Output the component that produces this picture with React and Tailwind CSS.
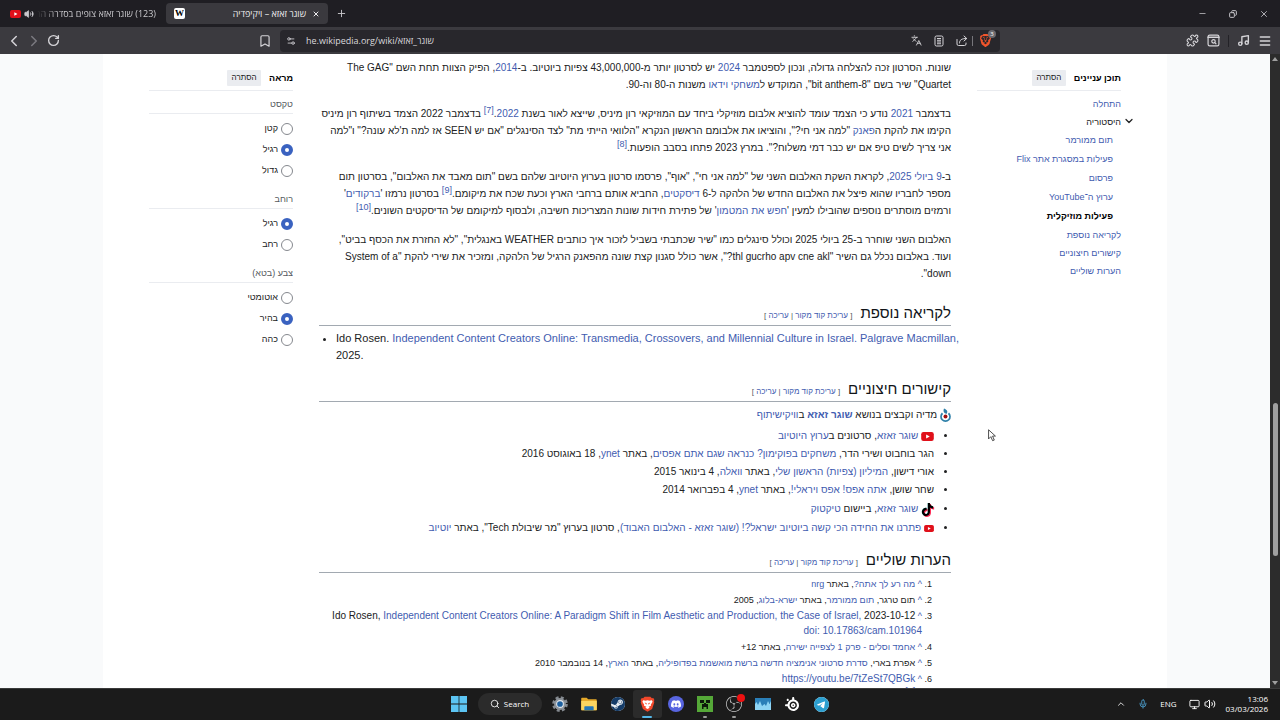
import React from 'react';
import {
  Bookmark,
  ChevronDown,
  ChevronLeft,
  ChevronRight,
  ChevronUp,
  Languages,
  Menu,
  Mic,
  Minus,
  Monitor,
  Music,
  Plus,
  Puzzle,
  RotateCw,
  Search,
  Copy,
  Settings2,
  Volume2,
  X,
} from 'lucide-react';
import { SiBrave, SiDiscord, SiObsstudio, SiSteam, SiSteelseries, SiTelegram, SiTiktok } from 'react-icons/si';

const A = ({ children, className = '' }) => (
  <a href="#" className={`text-[#3f5cb0] ${className}`}>{children}</a>
);

const Sup = ({ children }) => (
  <sup className="text-[9px] leading-none"><A>[{children}]</A></sup>
);

const YouTubeLogo = ({ className }) => (
  <svg viewBox="0 0 28 20" className={className} aria-hidden="true">
    <rect width="28" height="20" rx="5" fill="#e0101a" />
    <path d="M11 5.5v9l8-4.5z" fill="#fff" />
  </svg>
);

const CommonsLogo = () => (
  <svg viewBox="0 0 22 28" className="inline-block h-[14px] w-[11px] align-middle" aria-hidden="true">
    <circle cx="11" cy="17" r="4" fill="#a01010" />
    <path d="M5 10.500a9 9 0 1 0 12 0" fill="none" stroke="#2d7fa8" strokeWidth="3.400" />
    <path d="M8 1c7 3 8 6 5 11-6-2-7-6-5-11z" fill="#2d7fa8" />
  </svg>
);

const ReaderIcon = () => (
  <svg viewBox="0 0 24 24" className="size-3" fill="none" stroke="currentColor" strokeWidth="2">
    <rect x="4" y="2" width="16" height="20" rx="3" />
    <path d="M8 7h8M8 10.500h8M8 14h8M8 17.500h8" />
  </svg>
);

const ShareIcon = () => (
  <svg viewBox="0 0 24 24" className="size-3" fill="none" stroke="currentColor" strokeWidth="2" strokeLinecap="round" strokeLinejoin="round">
    <path d="M2 9v9a3 3 0 0 0 3 3h12a3 3 0 0 0 3-3v-2" />
    <path d="M7 16c0-6 4-9 14-9M16 2l5.500 5-5.500 5" />
  </svg>
);

const TabSearchIcon = () => (
  <svg viewBox="0 0 24 24" className="size-[13px]" fill="none" stroke="currentColor" strokeWidth="2.200" strokeLinecap="round">
    <rect x="2" y="2" width="20" height="20" rx="3" />
    <path d="M2 6h20" strokeWidth="3" />
    <circle cx="12" cy="13.500" r="3.200" />
    <path d="M14.500 16l2 2" />
  </svg>
);

const tocItems = [
  { label: 'התחלה' },
  { label: 'היסטוריה', open: true },
  { label: 'תום ממורמר', sub: true },
  { label: 'פעילות במסגרת אתר Flix', sub: true },
  { label: 'פרסום', sub: true },
  { label: 'ערוץ ה־YouTube', sub: true },
  { label: 'פעילות מוזיקלית', sub: true, active: true },
  { label: 'לקריאה נוספת' },
  { label: 'קישורים חיצוניים' },
  { label: 'הערות שוליים' },
];

const appearance = [
  { id: 'text', title: 'טקסט', options: ['קטן', 'רגיל', 'גדול'], value: 'רגיל' },
  { id: 'width', title: 'רוחב', options: ['רגיל', 'רחב'], value: 'רגיל' },
  { id: 'color', title: 'צבע (בטא)', options: ['אוטומטי', 'בהיר', 'כהה'], value: 'בהיר' },
];

const PanelHeader = ({ title }) => (
  <div className="flex h-[37px] items-end gap-2 border-b border-[#eaecf0] pb-1">
    <h2 className="text-[9px] leading-4 font-bold text-black">{title}</h2>
    <button type="button" className="h-4 w-[34px] rounded-[1px] bg-[#eaecf0] text-[8px] leading-4 text-[#202122]">הסתרה</button>
  </div>
);

const Contents = () => (
  <nav aria-label="תוכן עניינים">
    <PanelHeader title="תוכן עניינים" />
    <ul className="pt-1 text-[9px] whitespace-nowrap">
      {tocItems.map((item) => (
        <li key={item.label} className={item.sub ? 'ps-2 leading-[19px]' : 'relative leading-[18px]'}>
          {item.open && <ChevronDown size={12} strokeWidth={2.5} className="absolute top-0.5 -right-[14px] text-[#202122]" />}
          <a
            href="#"
            className={item.active ? 'font-bold text-black' : item.open ? 'text-[#202122]' : 'text-[#3f5cb0]'}
          >
            {item.label}
          </a>
        </li>
      ))}
    </ul>
  </nav>
);

const Appearance = () => (
  <aside>
    <PanelHeader title="מראה" />
    <div className="flex flex-col gap-[11px] pt-1.5 text-[9px]">
      {appearance.map((group) => (
        <fieldset key={group.id}>
          <legend className="w-full border-b border-[#eaecf0] pb-0.5 leading-[14px] text-[#54595d]">{group.title}</legend>
          <div className="pt-1">
            {group.options.map((option) => (
              <label key={option} className="flex h-[21px] items-center gap-[3px] text-[#202122]">
                <input
                  type="radio"
                  name={group.id}
                  defaultChecked={option === group.value}
                  className="size-3 appearance-none rounded-full border border-[#85888e] bg-white checked:border-4 checked:border-[#3a62c0]"
                />
                {option}
              </label>
            ))}
          </div>
        </fieldset>
      ))}
    </div>
  </aside>
);

const SectionHeading = ({ title, className = '' }) => (
  <div className={`flex h-7 items-baseline gap-2 border-b border-[#a2a9b1] ${className}`}>
    <h2 className="text-[15px] leading-[30px] text-[#101418]">{title}</h2>
    <span className="text-[8px] text-[#54595d]">
      [ <A>עריכת קוד מקור</A> | <A>עריכה</A> ]
    </span>
  </div>
);

const Article = () => (
  <main className="text-[10px] leading-[17px] whitespace-nowrap text-[#202122]">
    <div className="flex flex-col gap-3 pt-[5px]">
      <p>
        שונות. הסרטון זכה להצלחה גדולה, ונכון לספטמבר <A>2024</A> יש לסרטון יותר מ-43,000,000 צפיות ביוטיוב. ב-<A>2014</A>, הפיק הצוות תחת השם "The GAG<br />
        Quartet" שיר בשם "8-bit anthem", המוקדש ל<A>משחקי וידאו</A> משנות ה-80 וה-90.
      </p>
      <p>
        בדצמבר <A>2021</A> נודע כי הצמד עומד להוציא אלבום מוזיקלי ביחד עם המוזיקאי רון מיניס, שייצא לאור בשנת <A>2022</A>.<Sup>7</Sup> בדצמבר 2022 הצמד בשיתוף רון מיניס<br />
        הקימו את להקת ה<A>פאנק</A> "למה אני חי?", והוציאו את אלבומם הראשון הנקרא "הלוואי הייתי מת" לצד הסינגלים "אם יש SEEN אז למה ת'לא עונה?" ו"למה<br />
        אני צריך לשים טיפ אם יש כבר דמי משלוח?". במרץ 2023 פתחו בסבב הופעות.<Sup>8</Sup>
      </p>
      <p>
        ב-<A>9 ביולי 2025</A>, לקראת השקת האלבום השני של "למה אני חי", "אוף", פרסמו סרטון בערוץ היוטיוב שלהם בשם "תום מאבד את האלבום", בסרטון תום<br />
        מספר לחבריו שהוא פיצל את האלבום החדש של הלהקה ל-6 <A>דיסקטים</A>, החביא אותם ברחבי הארץ וכעת שכח את מיקומם.<Sup>9</Sup> בסרטון נרמזו '<A>ברקודים</A>'<br />
        ורמזים מוסתרים נוספים שהובילו למעין '<A>חפש את המטמון</A>' של פתירת חידות שונות המצריכות חשיבה, ולבסוף למיקומם של הדיסקטים השונים.<Sup>10</Sup>
      </p>
      <p>
        האלבום השני שוחרר ב-25 ביולי 2025 וכולל סינגלים כמו "שיר שכתבתי בשביל לזכור איך כותבים WEATHER באנגלית", "לא החזרת את הכסף בביט",<br />
        ועוד. באלבום נכלל גם השיר "thl gucrho apv cne akl?", אשר כולל סגנון קצת שונה מהפאנק הרגיל של הלהקה, ומזכיר את שירי להקת "System of a<br />
        down".
      </p>
    </div>

    <SectionHeading title="לקריאה נוספת" className="mt-4" />
    <ul dir="ltr" className="list-disc pt-1 pl-[17px] text-[11px]">
      <li>
        Ido Rosen. <A>Independent Content Creators Online: Transmedia, Crossovers, and Millennial Culture in Israel. Palgrave Macmillan,</A><br />
        2025.
      </li>
    </ul>

    <SectionHeading title="קישורים חיצוניים" className="mt-[10px]" />
    <p className="pt-1 leading-[18px]">
      <CommonsLogo /> מדיה וקבצים בנושא <A className="font-bold">שוגר זאזא</A> ב<A>וויקישיתוף</A>
    </p>
    <ul className="list-disc pt-[3px] pr-[17px] leading-[18px]">
      <li><YouTubeLogo className="inline-block h-[9px] w-[13px] align-middle" /> <A>שוגר זאזא</A>, סרטונים ב<A>ערוץ היוטיוב</A></li>
      <li>הגר בוחבוט ושירי הדר, <A>משחקים בפוקימון? כנראה שגם אתם אפסים</A>, באתר <A>ynet</A>,&rlm; 18 באוגוסט 2016</li>
      <li>אורי דישון, <A>המיליון (צפיות) הראשון שלי</A>, באתר <A>וואלה</A>, 4 בינואר 2015</li>
      <li>שחר שושן, <A>אתה אפס! אפס ויראלי!</A>, באתר <A>ynet</A>,&rlm; 4 בפברואר 2014</li>
      <li className="leading-5">
        <span className="relative inline-block size-[13px] align-middle">
          <SiTiktok size={13} className="absolute top-0 left-0 text-[#25f4ee]" />
          <SiTiktok size={13} className="absolute top-px left-px text-[#fe2c55]" />
          <SiTiktok size={13} className="relative text-black" />
        </span>{' '}
        <A>שוגר זאזא</A>, ביישום <A>טיקטוק</A>
      </li>
      <li><YouTubeLogo className="inline-block h-[7px] w-[10px] align-middle" /> <A>פתרנו את החידה הכי קשה ביוטיוב ישראל?! (שוגר זאזא - האלבום האבוד)</A>, סרטון בערוץ "מר שיבולת Tech", באתר <A>יוטיוב</A></li>
    </ul>

    <SectionHeading title="הערות שוליים" className="mt-2" />
    <ol className="flex list-decimal flex-col gap-px pt-1 pr-[29px] text-[9px] leading-[15px]">
      <li><A>^</A> <A>מה רע לך אתה?</A>, באתר <A>nrg</A></li>
      <li><A>^</A> תום טרגר, <A>תום ממורמר</A>, באתר <A>ישרא-בלוג</A>, 2005</li>
      <li>
        <A>^</A> <bdi dir="ltr" className="text-[10px] leading-3">Ido Rosen, <A>Independent Content Creators Online: A Paradigm Shift in Film Aesthetic and Production, the Case of Israel,</A> 2023-10-12</bdi><br />
        <bdi dir="ltr" className="text-[10px] leading-3"><A>doi: 10.17863/cam.101964</A></bdi>
      </li>
      <li><A>^</A> <A>אחמד וסלים - פרק 1 לצפייה ישירה</A>, באתר 12+</li>
      <li><A>^</A> אפרת בארי, <A>סדרת סרטוני אנימציה חדשה ברשת מואשמת בפדופיליה</A>, באתר <A>הארץ</A>, 14 בנובמבר 2010</li>
      <li><A>^</A> <A className="text-[10px] leading-3">https://youtu.be/7tZeSt7QBGk</A></li>
      <li>^ <Sup>1</Sup></li>
    </ol>
  </main>
);

const TabStrip = () => (
  <div className="flex h-[27px] shrink-0 items-center bg-[#1f1e23] text-[9px] text-[#c9c8cc]">
    <div className="flex w-[156px] shrink-0 items-center gap-[3px] pl-2.5">
      <YouTubeLogo className="h-2 w-[11px] shrink-0" />
      <Volume2 size={10} className="shrink-0" fill="currentColor" />
      <span dir="rtl" className="min-w-0 flex-1 overflow-hidden whitespace-nowrap [mask-image:linear-gradient(to_right,transparent,black_20px)]">
        (123) שוגר זאזא צופים בסדרה החו
      </span>
    </div>
    <div className="ml-2.5 flex h-[21px] w-[162px] shrink-0 items-center rounded-[4px] bg-[#3a393e] px-2 text-[#eeedf0]">
      <span className="flex size-[11px] items-center justify-center rounded-[2px] bg-white font-['Liberation_Serif',serif] text-[9px] font-bold text-black">W</span>
      <span dir="rtl" className="flex-1 pr-1.5 whitespace-nowrap">שוגר זאזא – ויקיפדיה</span>
      <button type="button" aria-label="Close tab"><X size={8} strokeWidth={3} /></button>
    </div>
    <button type="button" aria-label="New tab" className="ml-2"><Plus size={11} /></button>
    <div className="ml-auto flex items-center gap-[22px] pr-[11px]">
      <button type="button" aria-label="Minimize"><Minus size={9} /></button>
      <button type="button" aria-label="Restore"><Copy size={8} strokeWidth={3} className="-scale-x-100" /></button>
      <button type="button" aria-label="Close"><X size={10} /></button>
    </div>
  </div>
);

const Toolbar = () => (
  <div className="flex h-[27px] shrink-0 items-center bg-[#3b3a3f] text-[#d5d4d8]">
    <div className="flex w-[72px] items-center gap-0.5 pl-[5px]">
      <button type="button" aria-label="Back"><ChevronLeft size={18} /></button>
      <button type="button" aria-label="Forward" className="text-[#7b7a80]"><ChevronRight size={18} /></button>
      <button type="button" aria-label="Reload" className="ml-0.5"><RotateCw size={13} strokeWidth={2.5} /></button>
    </div>
    <div className="mx-auto flex w-[742px] items-center gap-2">
      <button type="button" aria-label="Bookmark" className="w-[14px]"><Bookmark size={14} className="mx-auto" /></button>
      <div className="flex h-[22px] min-w-0 flex-1 items-center rounded-[4px] bg-[#28272c] pr-1">
        <button type="button" aria-label="Site settings" className="px-1.5"><Settings2 size={10} /></button>
        <input
          dir="ltr"
          aria-label="Address"
          defaultValue="he.wikipedia.org/wiki/שוגר_זאזא"
          className="min-w-0 flex-1 bg-transparent pl-1 text-[9px] text-[#d9d8dc] outline-none"
        />
        <div className="flex items-center gap-[11px]">
          <button type="button" aria-label="Translate"><Languages size={11} /></button>
          <button type="button" aria-label="Reader mode"><ReaderIcon /></button>
          <button type="button" aria-label="Share"><ShareIcon /></button>
        </div>
        <span className="mr-1.5 ml-1 h-2.5 w-px bg-[#77767b]" />
        <button type="button" aria-label="Brave Shields" className="relative mr-1">
          <SiBrave size={13} className="text-[#f0552c]" />
          <span className="absolute -top-1 -right-1 size-2 rounded-full bg-[#6b6a70] text-center text-[6px] leading-2 text-white">3</span>
        </button>
      </div>
    </div>
    <div className="flex items-center gap-2 pr-2">
      <button type="button" aria-label="Extensions"><Puzzle size={13} /></button>
      <button type="button" aria-label="Search tabs"><TabSearchIcon /></button>
      <span className="h-3 w-px bg-[#232227]" />
      <button type="button" aria-label="Media"><Music size={13} strokeWidth={2.5} /></button>
      <button type="button" aria-label="Menu"><Menu size={14} strokeWidth={2.5} /></button>
    </div>
  </div>
);

const Scrollbar = () => (
  <div className="flex w-2.5 shrink-0 flex-col items-center justify-between bg-[#2c2c2c] py-[3px]">
    <span className="size-0 border-x-[3px] border-b-[4px] border-x-transparent border-b-[#9f9f9f]" />
    <span className="mt-[217px] h-[153px] w-[5px] rounded-full bg-[#9f9f9f]" />
    <span className="size-0 border-x-[3px] border-t-[4px] border-x-transparent border-t-[#9f9f9f]" />
  </div>
);

const TaskItem = ({ label, running, active, children }) => (
  <button
    type="button"
    aria-label={label}
    className={`relative flex h-7 w-[29px] items-center justify-center ${active ? 'rounded-[3px] bg-[#2b2b2b]' : ''}`}
  >
    {children}
    {active && <span className="absolute bottom-0 h-0.5 w-2.5 rounded-full bg-[#55b8ea]" />}
    {running && <span className="absolute bottom-0 h-0.5 w-1 rounded-full bg-[#9a9a9a]" />}
  </button>
);

const Taskbar = () => (
  <footer className="grid h-8 shrink-0 grid-cols-[1fr_auto_1fr] items-center border-t border-[#3a3a3a] bg-[#1b1b1b] pb-px text-white">
    <span />
    <div className="flex items-center">
      <TaskItem label="Start">
        <svg viewBox="0 0 16 16" className="size-4" fill="#5cc4f2">
          <path d="M0 0h7.6v7.6H0zM8.4 0H16v7.6H8.4zM0 8.4h7.6V16H0zM8.4 8.4H16V16H8.4z" />
        </svg>
      </TaskItem>
      <button type="button" className="mx-1 flex h-[22px] w-16 items-center justify-center gap-1 rounded-full bg-[#2b2b2b] text-[8px]">
        <Search size={10} /> Search
      </button>
      <TaskItem label="Settings">
        <svg viewBox="0 0 20 20" className="size-4">
          <circle cx="10" cy="10" r="8" fill="none" stroke="#84898f" strokeWidth="3.6" strokeDasharray="3.6 2.683" />
          <circle cx="10" cy="10" r="7.4" fill="#8e949b" />
          <circle cx="10" cy="10" r="4.2" fill="#1c5f9f" stroke="#e6ebef" strokeWidth="1.3" />
        </svg>
      </TaskItem>
      <TaskItem label="File Explorer">
        <svg viewBox="0 0 20 18" className="h-[14px] w-4">
          <path d="M0 2a1 1 0 0 1 1-1h6l2 2h10a1 1 0 0 1 1 1v13H0z" fill="#e5a92a" />
          <path d="M0 5h20v11a1 1 0 0 1-1 1H1a1 1 0 0 1-1-1z" fill="#fbd560" />
          <path d="M4 17v-4a1 1 0 0 1 1-1h10a1 1 0 0 1 1 1v4z" fill="#2477b8" />
        </svg>
      </TaskItem>
      <TaskItem label="Steam">
        <span className="rounded-full bg-[#e9eef3]"><SiSteam size={14} className="text-[#153c68]" /></span>
      </TaskItem>
      <TaskItem label="Brave" active>
        <svg viewBox="0 0 20 22" className="h-4 w-[15px]">
          <path d="M6 1h8l2 2 2-.3 1.500 2.800-.6 1.500.4 2-3 9L10 21.500 3.700 18l-3-9 .4-2-.6-1.500L2 2.700 4 3z" fill="#f1482b" />
          <path d="M4 6l3.500.6L10 6l2.500.6L16 6l1 2-2.500 4 .3 1.500-3.300 1.200L13 16l-3 2-3-2 1.500-1.300-3.300-1.200.3-1.500L3 8z" fill="#fff" />
          <path d="M6 9l3 .8-.6 2.200zM14 9l-3 .8.6 2.200z" fill="#f1482b" />
        </svg>
      </TaskItem>
      <TaskItem label="Discord">
        <span className="flex size-4 items-center justify-center rounded-full bg-[#5865e0]"><SiDiscord size={10} /></span>
      </TaskItem>
      <TaskItem label="Minecraft" running>
        <svg viewBox="0 0 16 16" className="size-4">
          <path d="M0 0h16v16H0z" fill="#55a838" />
          <path d="M3 4h4v3H3zM9 4h4v3H9zM7 7h2v1h2v5H9.500v-2h-3v2H5V8h2z" fill="#0d1a0a" />
        </svg>
      </TaskItem>
      <TaskItem label="OBS Studio" running>
        <SiObsstudio size={16} className="text-[#c9c9c9]" />
        <span className="absolute top-1 right-1 size-2 rounded-full bg-[#ee1111]" />
      </TaskItem>
      <TaskItem label="Task Monitor">
        <svg viewBox="0 0 16 12" className="h-3 w-4">
          <path d="M0 0h16v12H0z" fill="#2a7fb8" />
          <path d="M0 12V6l1.500-2L3 7l2-4 2 5 2.500-2L11 8l2-5 1.500 3L16 3v9z" fill="#8ed4f4" />
        </svg>
      </TaskItem>
      <TaskItem label="SteelSeries"><SiSteelseries size={14} /></TaskItem>
      <TaskItem label="Telegram">
        <span className="rounded-full bg-white"><SiTelegram size={15} className="text-[#2c9fd0]" /></span>
      </TaskItem>
    </div>
    <div className="flex items-center justify-end pr-3 text-[8px]">
      <ChevronUp size={10} />
      <Mic size={10} className="ml-3 text-[#4fa7d8]" />
      <span className="ml-3">ENG</span>
      <Monitor size={11} className="ml-3" />
      <Volume2 size={12} className="ml-1" />
      <div className="ml-2.5 text-right leading-[10px]">
        <div>13:06</div>
        <div>03/03/2026</div>
      </div>
    </div>
  </footer>
);

const App = () => {
  return (
    <div className="flex h-screen flex-col overflow-hidden font-['Open_Sans','Liberation_Sans',sans-serif]">
      <TabStrip />
      <Toolbar />
      <div className="relative flex min-h-0 flex-1">
        <div dir="rtl" className="min-w-0 flex-1 overflow-hidden bg-[#f9fafb] font-['Liberation_Sans',Arial,sans-serif]">
          <div className="mx-auto grid min-h-full max-w-[1064px] grid-cols-[144px_minmax(0,1fr)_144px] gap-[26px] bg-white px-[46px]">
            <Contents />
            <Article />
            <Appearance />
          </div>
        </div>
        <Scrollbar />
        <svg viewBox="0 0 14 22" className="absolute top-[375px] left-[988px] h-[13px] w-2" aria-hidden="true">
          <path d="M1 1v16l4-4 3 7 3-1-3-7h5z" fill="#fff" stroke="#333" strokeWidth="1.500" />
        </svg>
      </div>
      <Taskbar />
    </div>
  );
};

export default App;
